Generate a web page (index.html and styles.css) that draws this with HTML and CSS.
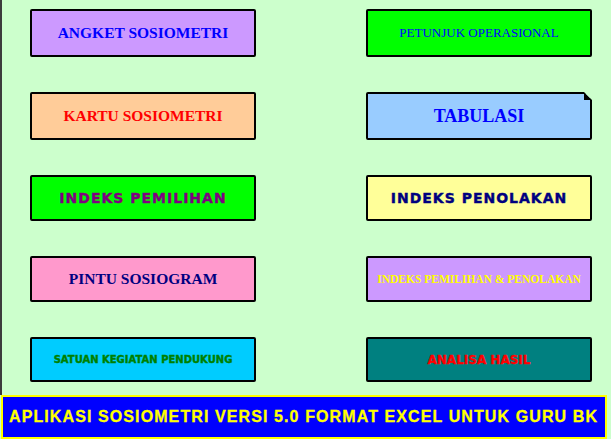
FILE: index.html
```html
<!DOCTYPE html>
<html>
<head>
<meta charset="utf-8">
<link rel="stylesheet" href="styles.css">
</head>
<body>
<div class="sheet">
  <div class="grid">
    <div class="btn angket">ANGKET SOSIOMETRI</div>
    <div class="btn petunjuk">PETUNJUK OPERASIONAL</div>
    <div class="btn kartu">KARTU SOSIOMETRI</div>
    <div class="btn tabulasi">TABULASI</div>
    <div class="btn pemilihan">INDEKS PEMILIHAN</div>
    <div class="btn penolakan">INDEKS PENOLAKAN</div>
    <div class="btn pintu">PINTU SOSIOGRAM</div>
    <div class="btn pp">INDEKS PEMILIHAN &amp; PENOLAKAN</div>
    <div class="btn satuan">SATUAN KEGIATAN PENDUKUNG</div>
    <div class="btn analisa">ANALISA HASIL</div>
  </div>
</div>
<div class="bar">APLIKASI SOSIOMETRI VERSI 5.0 FORMAT EXCEL UNTUK GURU BK</div>
</body>
</html>
```
FILE: styles.css
```css
html, body {
  margin: 0;
  padding: 0;
  background: #ccffcc;
  width: 611px;
  height: 439px;
  overflow: hidden;
}
.sheet {
  height: 395px;
  border-left: 2px solid #3c3c3c;
  box-sizing: border-box;
  padding: 9px 0 0 28px;
}
.grid {
  display: grid;
  grid-template-columns: 226px 226px;
  grid-template-rows: 48px 48px 46px 46px 45px;
  column-gap: 110px;
  row-gap: 35px;
}
.btn {
  position: relative;
  box-sizing: border-box;
  border: 2px solid #000;
  border-radius: 2px;
  display: flex;
  align-items: center;
  justify-content: center;
  white-space: nowrap;
  font-family: "Liberation Serif", "Times New Roman", serif;
  font-weight: bold;
}
.angket { background: #cc99ff; color: #0000ff; font-size: 15.5px; }
.kartu { background: #ffcc99; color: #ff0000; font-size: 15.5px; }
.pintu { background: #ff99cc; color: #000080; font-size: 15.5px; }
.petunjuk { background: #00ff00; color: #0000ff; font-size: 13px; font-weight: normal; }
.tabulasi { background: #99ccff; color: #0000ff; font-size: 18px; }
.tabulasi::after {
  content: "";
  position: absolute;
  top: -2px;
  right: -2px;
  width: 0;
  height: 0;
  border-style: solid;
  border-width: 0 8px 8px 0;
  border-color: transparent #ccffcc transparent transparent;
}
.tabulasi::before {
  content: "";
  position: absolute;
  top: -2px;
  right: -2px;
  width: 0;
  height: 0;
  border-style: solid;
  border-width: 8px 0 0 8px;
  border-color: transparent transparent transparent #000;
}
.pp { background: #cc99ff; color: #ffff00; font-size: 11.5px; }
.pemilihan, .penolakan, .satuan, .analisa {
  font-family: "DejaVu Sans", "Liberation Sans", sans-serif;
  font-weight: bold;
  -webkit-text-stroke: 0.4px currentColor;
}
.pemilihan { background: #00ff00; color: #800080; font-size: 14px; letter-spacing: 1px; }
.penolakan { background: #ffff99; color: #000080; font-size: 14px; letter-spacing: 1px; }
.satuan { background: #00ccff; color: #008000; font-size: 10px; }
.analisa { background: #008080; color: #ff0000; font-size: 12px; }
.bar {
  margin-left: 1px;
  width: 606px;
  height: 44px;
  box-sizing: border-box;
  border: 2px solid #ffff00;
  background: #0000ff;
  color: #ffff00;
  font-family: "Liberation Sans", Arial, sans-serif;
  font-weight: bold;
  font-size: 16px;
  letter-spacing: 1.1px;
  -webkit-text-stroke: 0.3px currentColor;
  white-space: nowrap;
  display: flex;
  align-items: center;
  padding-left: 6px;
}
```
